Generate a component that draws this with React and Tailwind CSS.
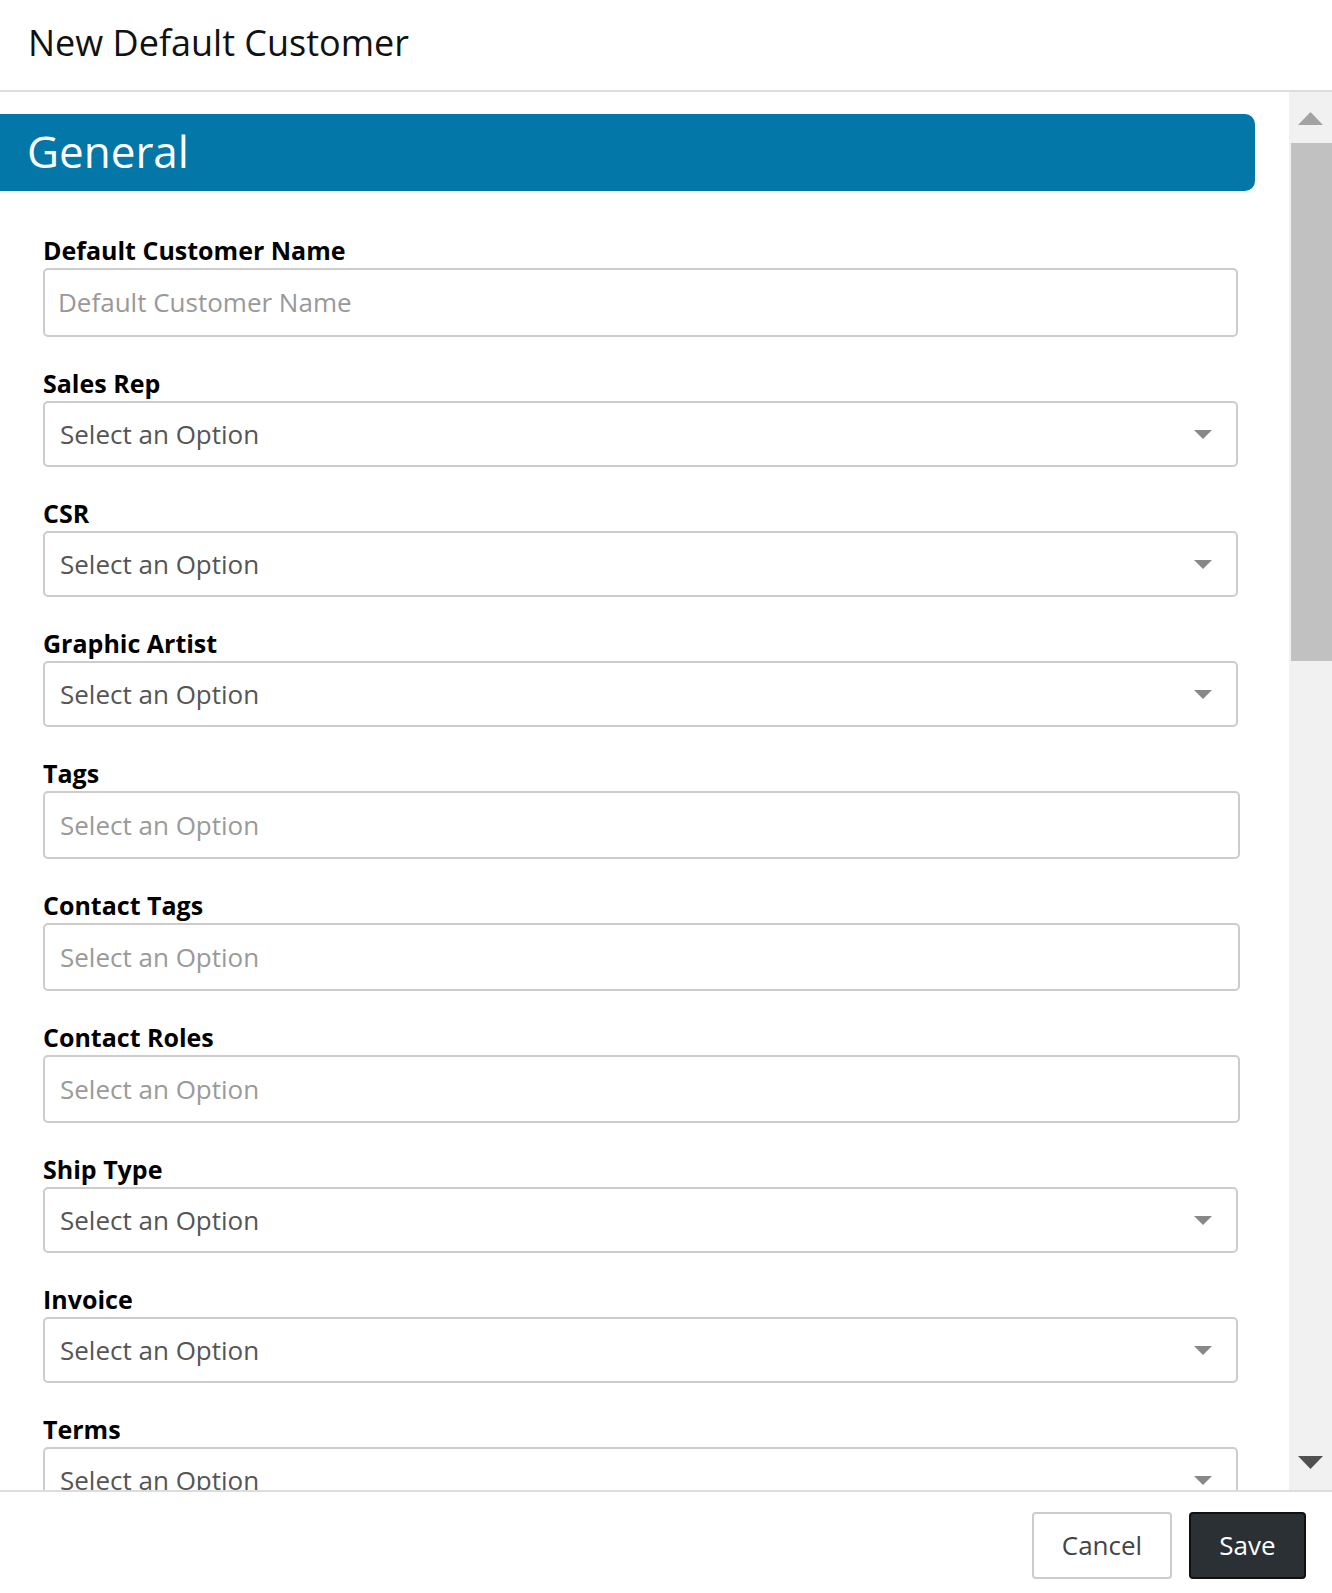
import React from 'react';

const font = { fontFamily: '"Open Sans", "Noto Sans", sans-serif' };

const fields = [
  { label: 'Default Customer Name', type: 'input' },
  { label: 'Sales Rep', type: 'select' },
  { label: 'CSR', type: 'select' },
  { label: 'Graphic Artist', type: 'select' },
  { label: 'Tags', type: 'multi' },
  { label: 'Contact Tags', type: 'multi' },
  { label: 'Contact Roles', type: 'multi' },
  { label: 'Ship Type', type: 'select' },
  { label: 'Invoice', type: 'select' },
  { label: 'Terms', type: 'select' },
];

const Caret = ({ className }) => (
  <svg width="18" height="9" viewBox="0 0 18 9" className={className}>
    <path d="M0 0 L18 0 L9 9 Z" fill="currentColor" />
  </svg>
);

const Field = ({ label, type }) => {
  let box;
  if (type === 'input') {
    box = (
      <div className="h-[69px] mr-[51px] border-2 border-[#cccccc] rounded-[5px] flex items-center pl-[13px] text-[26px] text-[#999999]">
        Default Customer Name
      </div>
    );
  } else if (type === 'multi') {
    box = (
      <div className="h-[68px] mr-[49px] border-2 border-[#cccccc] rounded-[5px] flex items-center pl-[15px] text-[26px] text-[#9a9a9a]">
        Select an Option
      </div>
    );
  } else {
    box = (
      <div className="h-[66px] mr-[51px] border-2 border-[#cccccc] rounded-[5px] flex items-center justify-between pl-[15px] pr-[24px] text-[26px] text-[#555555]">
        <span>Select an Option</span>
        <Caret className="text-[#888888]" />
      </div>
    );
  }
  return (
    <div className="mb-[29px]">
      <div className="text-[25px] font-bold text-black leading-[34px] mb-[1px]">{label}</div>
      {box}
    </div>
  );
};

export default function App() {
  return (
    <div className="h-[1593px] w-full bg-white flex flex-col overflow-hidden" style={font}>
      <div className="h-[92px] shrink-0 border-b-2 border-[#dddddd] flex items-center pl-[28px] pb-[4px]">
        <h1 className="text-[36px] text-[#111111] font-normal">New Default Customer</h1>
      </div>

      <div className="flex-1 flex min-h-0">
        <div className="flex-1 overflow-hidden">
          <div className="mt-[22px] mr-[34px] h-[77px] bg-[#0277a8] rounded-r-[10px] flex items-center pl-[27px]">
            <span className="text-[44px] text-white leading-none pb-[4px]">General</span>
          </div>
          <div className="pl-[43px] pt-[42px]">
            {fields.map((f) => (
              <Field key={f.label} label={f.label} type={f.type} />
            ))}
          </div>
        </div>

        <div className="w-[43px] shrink-0 bg-[#f1f1f1] flex flex-col">
          <div className="h-[51px] flex items-start justify-center pt-[20px]">
            <svg width="25" height="13" viewBox="0 0 25 13">
              <path d="M0 13 L25 13 L12.5 0 Z" fill="#a3a3a3" />
            </svg>
          </div>
          <div className="h-[518px] ml-[2px] bg-[#c1c1c1]" />
          <div className="flex-1" />
          <div className="h-[51px] flex items-start justify-center pt-[17px]">
            <svg width="25" height="13" viewBox="0 0 25 13">
              <path d="M0 0 L25 0 L12.5 13 Z" fill="#505050" />
            </svg>
          </div>
        </div>
      </div>

      <div className="h-[103px] shrink-0 border-t-2 border-[#dddddd] flex items-start justify-end pt-[20px] pr-[26px] gap-[17px]">
        <button className="h-[67px] w-[140px] border-2 border-[#cccccc] rounded-[4px] bg-white text-[26px] text-[#444444]">
          Cancel
        </button>
        <button className="h-[67px] w-[117px] border-2 border-[#111111] rounded-[4px] bg-[#2b3035] text-[26px] text-white">
          Save
        </button>
      </div>
    </div>
  );
}
